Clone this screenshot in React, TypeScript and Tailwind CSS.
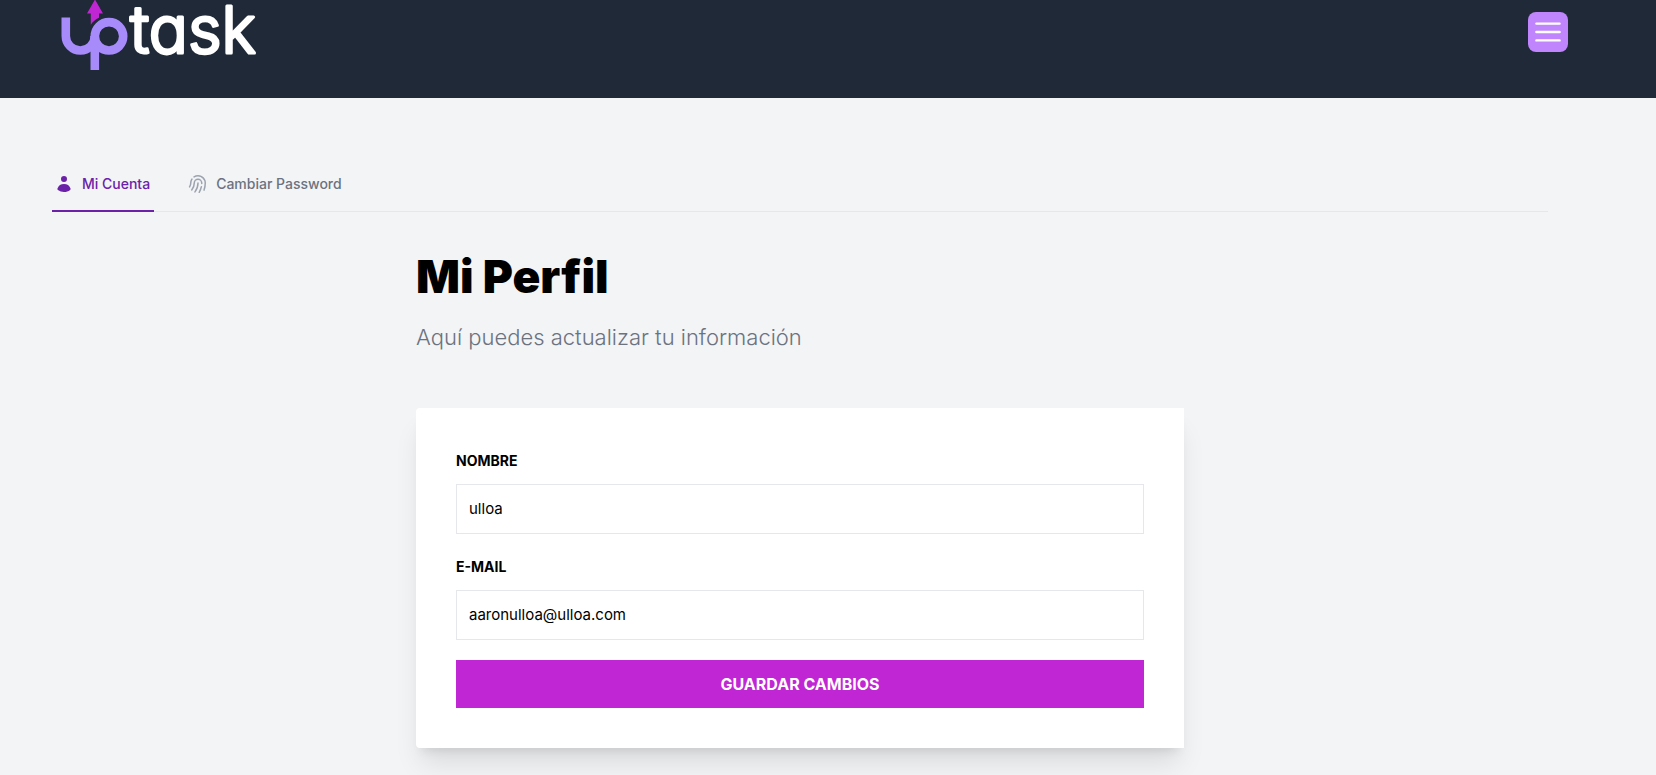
import { useState } from "react";
import type { FormEvent } from "react";
import { HiMiniBars3, HiMiniFingerPrint, HiMiniUser } from "react-icons/hi2";

function Logo() {
  return (
    <svg viewBox="0 0 208 72" className="h-18 w-52 overflow-visible" role="img" aria-label="UpTask">
      <g fill="none" stroke="#a78bfa" strokeWidth="8.6">
        <path d="M5.8 17.6V36a14.5 14.5 0 0 0 29 0" />
        <circle cx="49" cy="36.3" r="14.2" />
        <path d="M34.8 36v34" />
      </g>
      <path d="M35-.5 43 13.6H39V17.8C35.5 19.4 32.8 21.8 30.8 24.8V13.6H27Z" fill="#c026d3" />
      <text
        x="70"
        y="53"
        fill="#fff"
        stroke="#fff"
        strokeWidth="3"
        strokeLinejoin="round"
        className="font-['Inter',sans-serif] text-[65px] font-light [font-feature-settings:'cv11']"
      >
        task
      </text>
    </svg>
  );
}

function Header() {
  return (
    <header className="bg-[#1f2937] pr-14">
      <div className="mx-auto flex max-w-screen-2xl items-start justify-between pb-[26px]">
        <a href="#inicio" className="pl-7">
          <Logo />
        </a>
        <button
          type="button"
          aria-label="Abrir menú"
          className="mt-3 rounded-lg bg-[#c084fc] p-1 text-white"
        >
          <HiMiniBars3 className="size-8" aria-hidden="true" />
        </button>
      </div>
    </header>
  );
}

function Tabs() {
  return (
    <nav aria-label="Perfil" className="flex gap-8 border-b border-[#e5e7eb] text-sm font-medium">
      <a
        href="#perfil"
        aria-current="page"
        className="-mb-px flex items-center border-b-2 border-[#6b21a8] px-1 py-4 text-[#6b21a8]"
      >
        <HiMiniUser className="mr-2 -ml-0.5 size-5" aria-hidden="true" />
        Mi Cuenta
      </a>
      <a
        href="#password"
        className="-mb-px flex items-center border-b-2 border-transparent px-1 py-4 text-[#6b7280]"
      >
        <HiMiniFingerPrint className="mr-2 -ml-0.5 size-5 text-[#9ca3af]" aria-hidden="true" />
        Cambiar Password
      </a>
    </nav>
  );
}

type FieldProps = {
  id: string;
  label: string;
  type: string;
  value: string;
  onChange: (value: string) => void;
};

function Field({ id, label, type, value, onChange }: FieldProps) {
  return (
    <div className="flex flex-col gap-[10px]">
      <label htmlFor={id} className="text-sm leading-[26px] font-bold uppercase">
        {label}
      </label>
      <input
        id={id}
        type={type}
        value={value}
        onChange={(event) => onChange(event.target.value)}
        className="w-full border border-[#e5e7eb] bg-white p-3 text-[15px] leading-6"
      />
    </div>
  );
}

function ProfileForm() {
  const [name, setName] = useState("ulloa");
  const [email, setEmail] = useState("aaronulloa@ulloa.com");
  const handleSubmit = (event: FormEvent) => event.preventDefault();

  return (
    <section className="mx-auto max-w-3xl pt-10">
      <h1 className="text-[46px] leading-[48px] font-black">Mi Perfil</h1>
      <p className="mt-5 text-[22px] leading-[34px] font-[350] text-[#6b7280]">
        Aquí puedes actualizar tu información
      </p>
      <form
        onSubmit={handleSubmit}
        className="mt-[54px] flex flex-col gap-5 rounded-l bg-white p-10 shadow-xl"
      >
        <Field id="name" label="Nombre" type="text" value={name} onChange={setName} />
        <Field id="email" label="E-mail" type="email" value={email} onChange={setEmail} />
        <button type="submit" className="w-full bg-[#c026d3] p-3 font-bold text-white uppercase">
          Guardar cambios
        </button>
      </form>
    </section>
  );
}

export default function App() {
  return (
    <div className="min-h-screen bg-[#f3f4f6] font-['Inter',sans-serif] text-black">
      <Header />
      <main className="pr-14">
        <div className="mx-auto max-w-screen-2xl px-5 pt-[60px]">
          <Tabs />
          <ProfileForm />
        </div>
      </main>
    </div>
  );
}
